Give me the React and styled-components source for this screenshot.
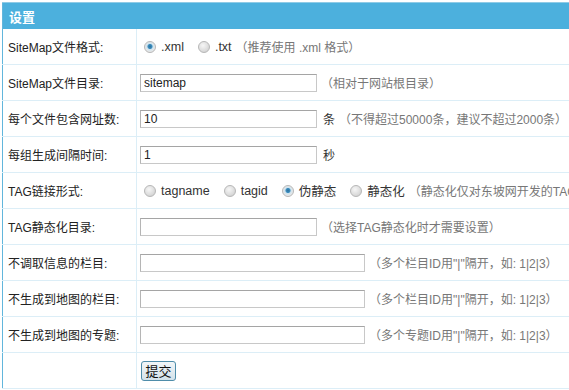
import React from 'react';
import styled, { createGlobalStyle } from 'styled-components';

const GlobalStyle = createGlobalStyle`
    html, body {
        margin: 0;
        padding: 0;
        background: #ffffff;
        overflow: hidden;
    }
    body {
        font-family: "Liberation Sans", "Noto Sans CJK SC", sans-serif;
        font-size: 12px;
        color: #333333;
    }
`;

const rows = [
    { label: 'SiteMap文件格式:', kind: 'radio', options: ['.xml', '.txt'], checked: 0, note: '（推荐使用 .xml 格式）' },
    { label: 'SiteMap文件目录:', kind: 'input', value: 'sitemap', note: '（相对于网站根目录）' },
    { label: '每个文件包含网址数:', kind: 'input', value: '10', unit: '条', note: '（不得超过50000条，建议不超过2000条）' },
    { label: '每组生成间隔时间:', kind: 'input', value: '1', unit: '秒' },
    { label: 'TAG链接形式:', kind: 'radio', options: ['tagname', 'tagid', '伪静态', '静态化'], checked: 2, note: '（静态化仅对东坡网开发的TAG系统有效）' },
    { label: 'TAG静态化目录:', kind: 'input', value: '', note: '（选择TAG静态化时才需要设置）' },
    { label: '不调取信息的栏目:', kind: 'input', wide: true, value: '', note: '（多个栏目ID用"|"隔开，如: 1|2|3）' },
    { label: '不生成到地图的栏目:', kind: 'input', wide: true, value: '', note: '（多个栏目ID用"|"隔开，如: 1|2|3）' },
    { label: '不生成到地图的专题:', kind: 'input', wide: true, value: '', note: '（多个专题ID用"|"隔开，如: 1|2|3）' },
];

export default function App() {
    return (
        <>
            <GlobalStyle />
            <Page>
                <Table>
                    <tbody>
                        <tr>
                            <HeadCell colSpan={2}>设置</HeadCell>
                        </tr>
                        {rows.map((row, index) => (
                            <tr key={`${row.label}_${index}`}>
                                <LabelCell>{row.label}</LabelCell>
                                <FieldCell>
                                    <Field>
                                        {row.kind === 'radio' ? (
                                            <Options>
                                                {row.options.map((opt, i) => (
                                                    <Option key={opt}>
                                                        <Radio checked={i === row.checked} />
                                                        {opt}
                                                    </Option>
                                                ))}
                                            </Options>
                                        ) : (
                                            <TextInput defaultValue={row.value} wide={row.wide ? 1 : 0} />
                                        )}
                                        {row.unit && <Unit>{row.unit}</Unit>}
                                        {row.note && <Note>{row.note}</Note>}
                                    </Field>
                                </FieldCell>
                            </tr>
                        ))}
                        <tr>
                            <LabelCell />
                            <FieldCell>
                                <Submit>提交</Submit>
                            </FieldCell>
                        </tr>
                    </tbody>
                </Table>
            </Page>
        </>
    );
}

const Page = styled.div`
    padding: 2px 0 0 2px;
    width: 700px;
`;

const Table = styled.table`
    border-collapse: collapse;
    width: 680px;
    border: 1px solid #62b6dc;
    border-top-color: #8fcbe6;
    white-space: nowrap;
`;

const HeadCell = styled.td`
    height: 26px;
    padding: 0 0 0 6px;
    background: #4cb0dd;
    color: #ffffff;
    font-weight: bold;
    font-size: 13px;
    text-align: left;
    vertical-align: middle;
`;

const LabelCell = styled.td`
    width: 128px;
    height: 35px;
    padding: 0 0 0 5px;
    border-bottom: 1px solid #dceef7;
    border-right: 1px solid #dceef7;
    color: #222222;
    font-size: 12px;
    vertical-align: middle;
`;

const FieldCell = styled.td`
    height: 35px;
    padding: 0 0 0 3px;
    border-bottom: 1px solid #dceef7;
    vertical-align: middle;
`;

const Field = styled.div`
    display: flex;
    align-items: center;
`;

const Options = styled.div`
    display: flex;
    align-items: center;
    gap: 14px;
    padding-left: 4px;
    font-size: 12.5px;
    color: #333333;
`;

const Option = styled.label`
    display: flex;
    align-items: center;
    gap: 5px;
`;

const Radio = styled.span`
    display: inline-block;
    width: 12px;
    height: 12px;
    border-radius: 50%;
    box-sizing: border-box;
    border: 1px solid #b8b8b8;
    background: ${(props) =>
        props.checked
            ? 'radial-gradient(circle at 50% 45%, #2a6f9a 0, #3f8fc0 28%, #cfe3ee 40%, #e8e8e8 70%, #d0d0d0 100%)'
            : 'radial-gradient(circle at 40% 35%, #f6f6f6 0, #dcdcdc 60%, #c6c6c6 100%)'};
`;

const TextInput = styled.input`
    width: ${(props) => (props.wide ? '225px' : '177px')};
    height: 18px;
    box-sizing: border-box;
    margin: 0;
    padding: 0 3px;
    border: 1px solid #c8c8c8;
    border-top-color: #a5a5a5;
    border-left-color: #b5b5b5;
    font-family: "Liberation Sans", "Noto Sans CJK SC", sans-serif;
    font-size: 12px;
    color: #222222;
    outline: none;
`;

const Unit = styled.span`
    margin-left: 6px;
    color: #333333;
`;

const Note = styled.span`
    margin-left: 4px;
    color: #777777;
    font-size: 12px;
`;

const Submit = styled.button`
    margin-left: 1px;
    width: 35px;
    height: 20px;
    padding: 0;
    border: 1px solid #4f8daa;
    border-radius: 3px;
    background: linear-gradient(#f2f6f8, #d3e2ea);
    font-family: "Noto Sans CJK SC", sans-serif;
    font-size: 13px;
    line-height: 18px;
    color: #111111;
`;
